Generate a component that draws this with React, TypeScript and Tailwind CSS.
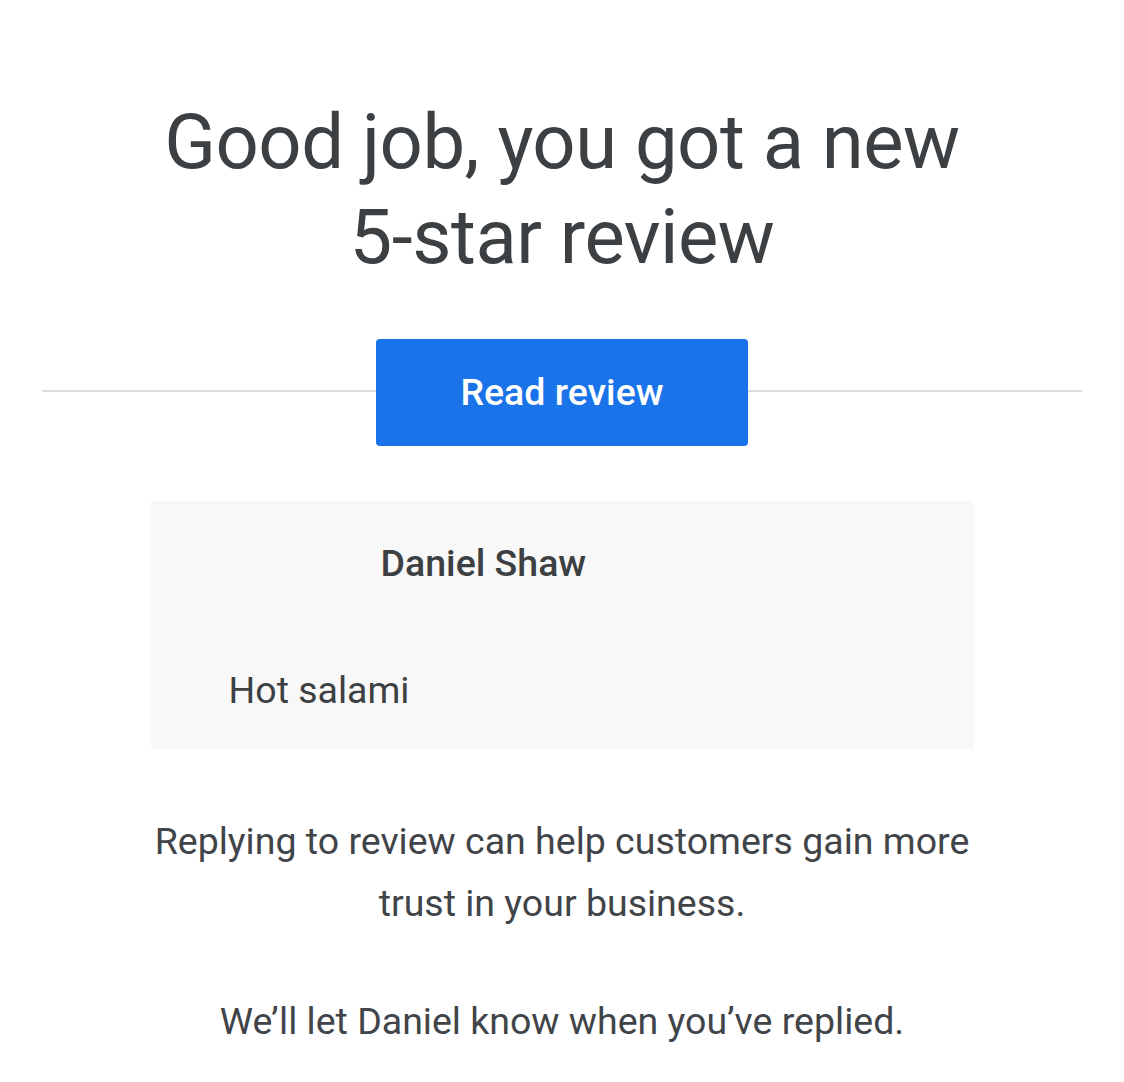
export default function App() {
  const font = { fontFamily: "Roboto, 'Noto Sans', sans-serif" };
  return (
    <div className="min-h-[1082px] w-full bg-white text-[#3c4043]" style={font}>
      <div className="flex flex-col items-center pt-[95px]">
        <h1 className="text-center text-[76px] font-normal leading-[95px] tracking-[-0.5px]">
          Good job, you got a new
          <br />
          5-star review
        </h1>

        {/* divider with button over it */}
        <div className="relative mt-[54px] flex w-[1040px] justify-center">
          <div className="absolute left-0 right-0 top-[51px] h-[2px] bg-[#dadce0]" />
          <button className="relative h-[107px] w-[372px] rounded-[4px] bg-[#1a73e8] text-[37.5px] font-medium text-white">
            Read review
          </button>
        </div>

        <div className="mt-[55px] w-[823px] bg-[#f8f8f8] pt-[40px] pb-[37px]">
          <div className="pl-[230px] text-[37.5px] font-medium leading-[44px]">Daniel Shaw</div>
          <div className="mt-[83px] pl-[78px] text-[37.5px] leading-[44px]">Hot salami</div>
        </div>

        <p className="mt-[61px] w-[860px] text-center text-[37.5px] leading-[62px] text-[#414448]">
          Replying to review can help customers gain more trust in your business.
        </p>
        <p className="mt-[56px] text-center text-[37.5px] leading-[62px] text-[#414448]">
          We’ll let Daniel know when you’ve replied.
        </p>
      </div>
    </div>
  );
}
